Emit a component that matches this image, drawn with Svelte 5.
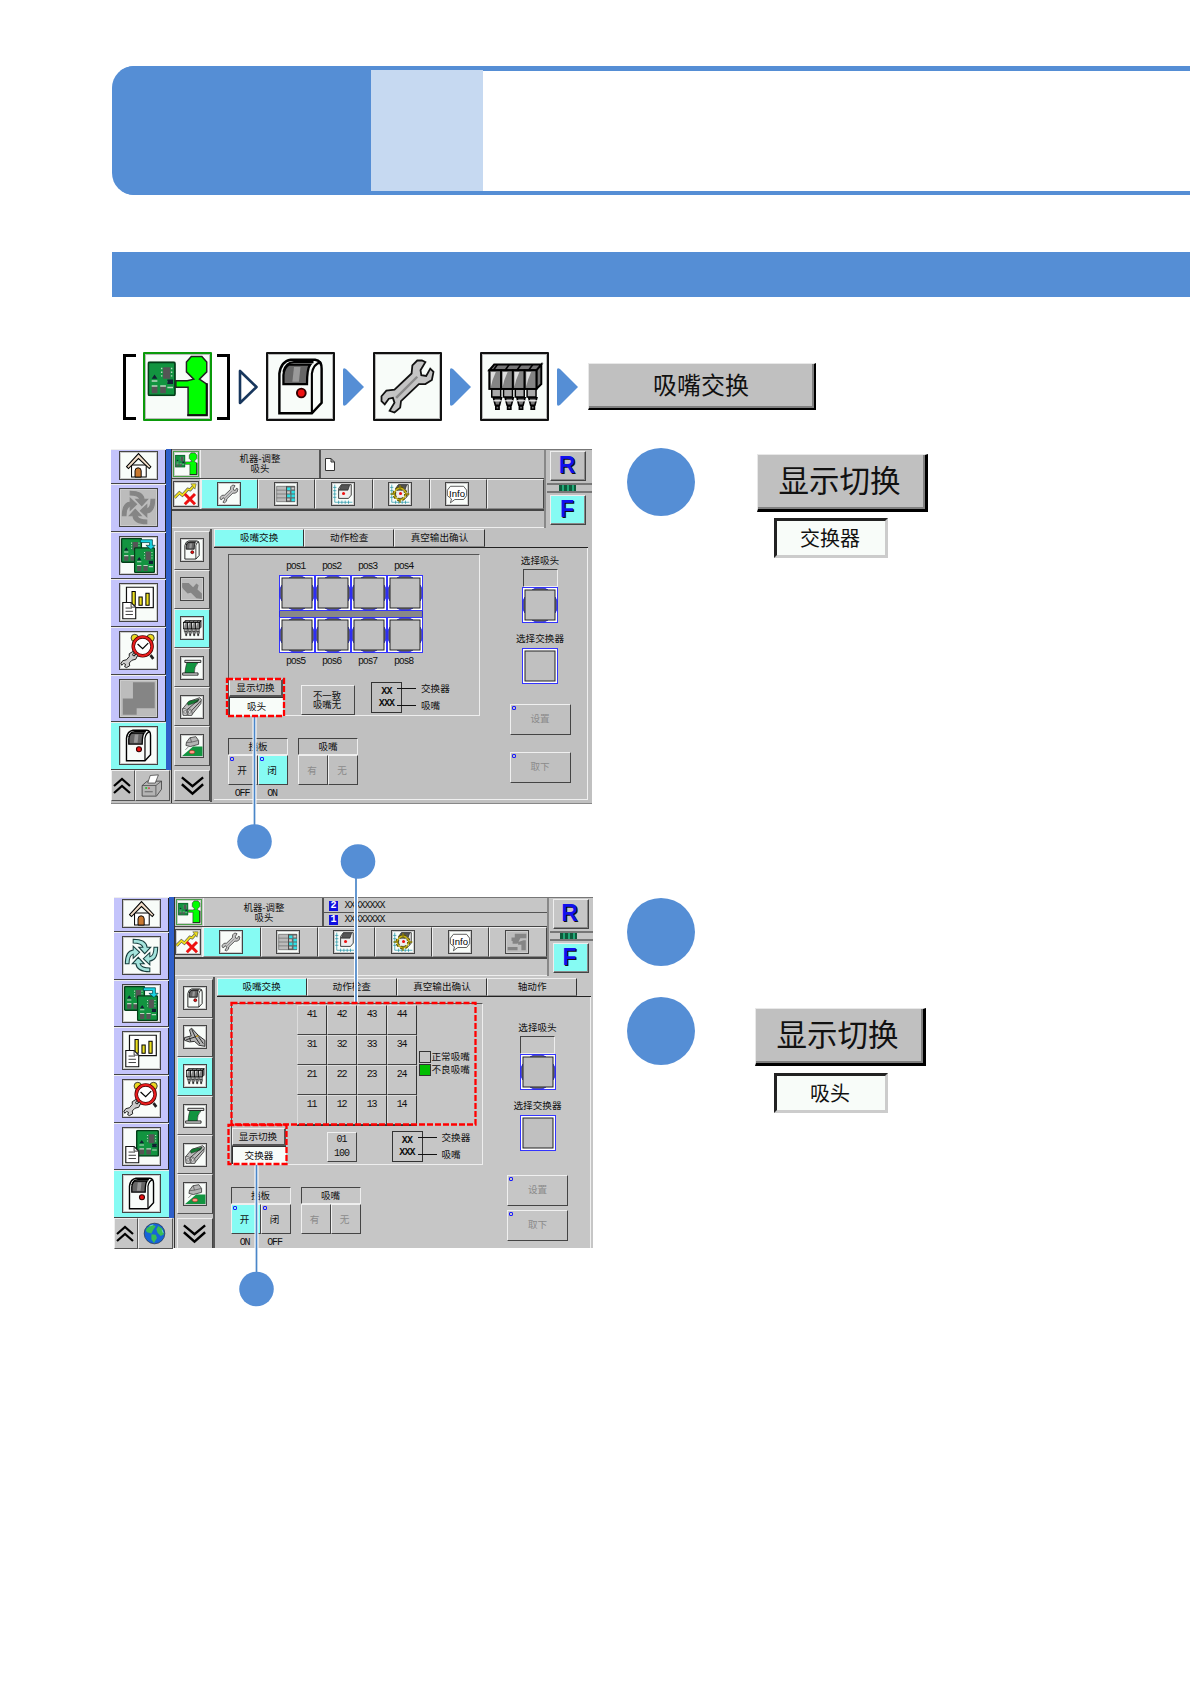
<script>
	const screens = [
		{
			id: 'head',
			nav: ['home', 'cycleOff', 'boards', 'chart', 'alarm', 'blocks', 'machine'],
			extra: 'printer',
			strip: ['machine', 'hand', 'head', 'belt', 'feeder', 'tray'],
			tools: ['wrench', 'table', 'axis', 'gear', 'info', ''],
			tabs: ['吸嘴交换', '动作检查', '真空输出确认'],
			mode: '吸头',
			shutter: 'close',
			shutterLabels: ['OFF', 'ON']
		},
		{
			id: 'changer',
			nav: ['home', 'cycle', 'boards', 'chart', 'alarm', 'report', 'machine'],
			extra: 'globe',
			strip: ['machine', 'handOn', 'head', 'belt', 'feeder', 'tray'],
			tools: ['wrench', 'table', 'axis', 'gear', 'info', 'unit'],
			tabs: ['吸嘴交换', '动作检查', '真空输出确认', '轴动作'],
			mode: '交换器',
			shutter: 'open',
			shutterLabels: ['ON', 'OFF']
		}
	];

	const cells = [41, 42, 43, 44, 31, 32, 33, 34, 21, 22, 23, 24, 11, 12, 13, 14];
	const frameless = ['', 'up', 'down', 'printer', 'globe'];
</script>

{#snippet pcb(x, y, w, h)}
	<svg {x} {y} width={w} height={h} viewBox="0 0 20 24" preserveAspectRatio="none">
		<rect x=".6" y=".6" width="18.8" height="22.8" rx="1" fill="#129440" stroke="#033d18" stroke-width="1.3" />
		<path d="M11 4h5v8h-5zM3 17h4v5H3zM9 17h4v5H9z" fill="#555" />
		<path d="M9.5 5h1M9.5 7.5h1M9.5 10h1M16.5 5h1M16.5 7.5h1M16.5 10h1M3 17h4M9 17h4M3 13.5h4M14 14h4M14 18h4" stroke="#b8d8bf" />
		<path d="M3 12l2-3 2 3zM14 12.5h4v3h-4z" fill="#123" />
	</svg>
{/snippet}

{#snippet glyph(name)}
	{#if name === 'operator'}
		{@render pcb(1.5, 4.5, 17.5, 21.5)}
		<path d="M28.500 1.500h6.500l3 3.500v6l-4.500 4.500 4.500 3v19H26.500V20.500H19v-4h7l4-1-4.500-4.500V5z" fill="#0f0" stroke="#222" stroke-width=".9" />
		<path d="M26 37.700h12V18" fill="none" stroke="#111" stroke-width="1.300" />
	{:else if name === 'machine'}
		<path d="M7 36.500V12Q8 4.500 14 3.500H29Q33 4 33 9V30L27 36.500z" fill="#f8fcf9" stroke="#000" stroke-width="1.500" />
		<path d="M27 36.500V12Q28 6 32.500 5M9.500 11Q11 5 16 5h12" fill="none" stroke="#000" stroke-width="1.300" />
		<path d="M9.500 18.500V13Q10 8 13 6.500H26Q24 9 24 18.500z" fill="#666" stroke="#000" stroke-width="1.400" />
		<path d="M15 17l1-9h4l-1 9z" fill="#999" />
		<circle cx="20.500" cy="24" r="2.700" fill="#e11" stroke="#300" stroke-width="1.200" />
	{:else if name === 'wrench'}
		<path d="M29 4l2 1-3 5 .5 3 3 .5 2.500-4.500 2 2-1 5-4 2.500h-4L16 29l-.5 4-3.500 3-3-1 3-5-1-3-2.500.5L6 31l-2-2v-3l3-3.500 5-.5L22.500 12 23 7l3-3z" fill="#c4c4c4" stroke="#111" stroke-width="1.100" />
		<path d="M13 27L26 14" stroke="#8a8a8a" stroke-width="1.500" />
	{:else if name === 'head'}
		<path d="M4.500 10l3-3.500H36.500L33.500 10zM33.500 10l3-3.500v12l-3 3z" fill="#777" stroke="#000" stroke-width="1.200" />
		{#each [0, 1, 2, 3] as i}
			<g transform="translate({4.5 + i * 7.25} 0)">
				<path d="M1.500 21.500h5.500v5h-5.500z" fill="#aaa" stroke="#000" stroke-width=".9" />
				<path d="M2.500 27h5l-1.200 4.500H3.700zM4 32h2v2H4z" fill="#777" stroke="#000" stroke-width="1" />
				<path d="M2.500 28.800h5" stroke="#fff" stroke-width=".7" />
				<rect y="10" width="7.250" height="11.500" fill="#848484" stroke="#000" stroke-width="1.200" />
				<path d="M1 11h3l-2 5-1 4z" fill="#ddd" />
				<path d="M2.500 10L5 6.500" stroke="#000" />
			</g>
		{/each}
	{:else if name === 'home'}
		<path d="M11 35.500V20h19v15.500z" fill="#fff" stroke="#000" stroke-width="1.300" />
		<path d="M4.500 22L20 5l16 17-2 2.500L20 11.500 7 24.500z" fill="#f2ddc8" stroke="#000" stroke-width="1.300" />
		<path d="M15.500 35.500V27.500q0-4 4-4t4 4v8z" fill="#c87830" stroke="#000" stroke-width="1.200" />
	{:else if name === 'cycle' || name === 'cycleOff'}
		<g fill={name === 'cycle' ? '#a5e4dd' : '#858585'} stroke={name === 'cycle' ? '#163c3c' : '#858585'} stroke-width="1.100">
			{#each [0, 90, 180, 270] as a}
				<path d="M11 2.500Q25 2.500 26 11h4l-6.500 7-6.500-7h4.500Q20 6.500 11 6.500z" transform="rotate({a} 20 20)" />
			{/each}
		</g>
	{:else if name === 'boards'}
		{@render pcb(1, 1, 23, 27)}
		{@render pcb(15, 11, 23, 28)}
		<path d="M22 3h13v6h3l-4.500 4.500L28 9h4V6H22z" fill="#19d4e4" stroke="#044" stroke-width=".8" />
	{:else if name === 'chart' || name === 'report'}
		{#if name === 'report'}
			{@render pcb(14, 2, 25, 29)}
		{:else}
			<path d="M7 3.500h29v22H7z" fill="#fff" stroke="#111" stroke-width="1.300" />
			<path d="M13 23V8h3.500v15zM20.500 23v-9H24v9zM28 23V10h3.500v13z" fill="#ede020" stroke="#000" stroke-width="1.100" />
		{/if}
		<path d="M3 37.500V20h9l5 5v12.500z" fill="#fff" stroke="#111" stroke-width="1.200" />
		<path d="M12 20v5h5M6 26h7M6 29.500h8M6 33h8" fill="none" stroke="#333" />
	{:else if name === 'alarm'}
		<circle cx="16" cy="6.500" r="4" fill="#ecd820" stroke="#333" />
		<circle cx="33" cy="6.500" r="4" fill="#ecd820" stroke="#333" />
		<path d="M17 25l-3 4M33 25l3 4" stroke="#222" stroke-width="3" />
		<circle cx="24.500" cy="15.500" r="10.200" fill="#fff" stroke="#400" stroke-width="3.800" />
		<circle cx="24.500" cy="15.500" r="10.200" fill="none" stroke="#e81c1c" stroke-width="2.400" />
		<path d="M19 13l5.500 5 6-6" fill="none" stroke="#000" stroke-width="1.300" />
		<path d="M14 21l1 1-1.500 3 2 1 2-2.500 1.500 2-2 4-4 1-3 3 .5 3L7 38.500l-2-1 1-2.500-2-1L2 36l-1-2 2-3 4-1 3-3.500v-3z" fill="#ccc" stroke="#111" />
	{:else if name === 'blocks'}
		<path d="M14 2.500h23.500v28H18v7H3V20h11z" fill="#858585" />
	{:else if name === 'printer'}
		<path d="M5 20l8-7h23v13l-8 11H5z" fill="#b4b4b4" stroke="#333" stroke-width="1.200" />
		<path d="M5 20h22v16M27 20l9-7M9 30h13" fill="none" stroke="#333" />
		<path d="M14 16l4-12 13-1-5 13z" fill="#fff" stroke="#222" />
		<path d="M10 24h3" stroke="#0b0" stroke-width="2" />
		<path d="M15 24h2" stroke="#d00" stroke-width="2" />
	{:else if name === 'globe'}
		<circle cx="20" cy="20" r="16.500" fill="#1764d8" stroke="#123" />
		<path d="M8 11l8-5 6 2-4 6-3 6-7-2-2-3zM15 21l7 1 2 5-5 8-4-6zM26 8l6 4 3 9-5 3-5-5-2-6z" fill="#39bd54" />
		<path d="M12 8l6-2M32 14l2 5" stroke="#9ce8ff" />
	{:else if name === 'up'}
		<path d="M4 20L20 6l16 14M4 34L20 20l16 14" fill="none" stroke="#000" stroke-width="4.500" />
	{:else if name === 'down'}
		<path d="M3 7l17 14L37 7M3 18l17 15 17-15" fill="none" stroke="#000" stroke-width="3.800" />
	{:else if name === 'hand'}
		<path d="M2 9h12l8 8 6-7 4 3-2 8 8 7v10l-10-1-10-10-6 1-8-8-2-3z" fill="#858585" />
	{:else if name === 'handOn'}
		<path d="M1 21l12-3-3-11 4-3 12 13 12 9v11l-11-2-8-7-9 1-9-3z" fill="#b4b4b4" stroke="#111" stroke-width="1.500" />
		<path d="M14 6l7 15M4 25l16-5 6-3M21 21l8 12M26 19l9 13M10 21l2 7" fill="none" stroke="#222" stroke-width="1.700" />
		<path d="M22 19l4-1" stroke="#da2" stroke-width="2.500" />
	{:else if name === 'belt'}
		<path d="M11 9h21q-9 9-8 21H7q1-12 4-21z" fill="#129440" stroke="#111" />
		<path d="M7 6h29v4H7zM3 29h28v4H3z" fill="#ddd" stroke="#111" stroke-width="1.500" />
	{:else if name === 'feeder'}
		<path d="M3 23L14 10 34 3l3 3-1 8-17 21H4z" fill="#bbb" stroke="#222" stroke-width="1.300" />
		<path d="M11 13l4-4 18-3-3 5-17 6z" fill="#147a32" stroke="#111" stroke-width=".6" />
		<path d="M11 25L33 6M17 29L36 9" stroke="#222" stroke-width="1.400" />
		<path d="M3 23h5q3 2 3 6v6H4zM12 24h5q3 2 3 6v5h-7z" fill="#ddd" stroke="#222" />
		<circle cx="7.500" cy="29" r="2.400" fill="#fff" stroke="#222" />
		<circle cx="16" cy="29" r="2.400" fill="#fff" stroke="#222" />
	{:else if name === 'tray'}
		<path d="M2 38l20-17h17v17z" fill="#129440" />
		<path d="M10 13l6-8 11-2 5 7v7l-15 4-8-2z" fill="#b5b5b5" stroke="#222" stroke-width="1.300" />
		<path d="M10 14l9-1 12-3M17 5l2 8M14 21l-6 6" fill="none" stroke="#333" />
		<ellipse cx="20" cy="31" rx="5" ry="3" fill="#ff9c88" stroke="#c22" />
	{:else if name === 'stats'}
		<path d="M1 26l8-8 5 4 9-10 4 1 8-9" fill="none" stroke="#555" stroke-width="5" />
		<path d="M1 26l8-8 5 4 9-10 4 1 8-9" fill="none" stroke="#efe01c" stroke-width="3" />
		<path d="M28 3h9l-2 9z" fill="#efe01c" stroke="#555" />
		<path d="M18 20l17 17M35 20L18 37" stroke="#e11" stroke-width="5" />
	{:else if name === 'table'}
		<path d="M3 6h18v28H3z" fill="#bbb" stroke="#444" />
		<path d="M21 6h15v28H21z" fill="#666" stroke="#222" />
		<path d="M22 8h6v5h-6zM30 14h6v5h-6zM22 21h6v5h-6zM30 21h6v5h-6zM30 28h6v5h-6z" fill="#2ce0e6" />
		<path d="M30 8h5v4h-5zM22 15h5v4h-5zM22 28h5v4h-5z" fill="#ccc" />
		<path d="M3 13h18M3 20h18M3 27h18" stroke="#555" />
	{:else if name === 'axis' || name === 'gear'}
		<path d="M5 3v32h32M2 8h6M2 14h6M2 20h6M2 26h6M12 32v6M18 32v6M24 32v6M30 32v6" fill="none" stroke="#138ca0" stroke-width="1.200" />
		<path d="M12 28V10l5-7h18v19l-5 6z" fill="#eee" stroke="#111" stroke-width="1.400" />
		<path d="M13 13l4-9h15l-3 9z" fill="#555" stroke="#111" />
		{#if name === 'gear'}
			<circle cx="20" cy="20" r="10.500" fill="none" stroke="#5c5000" stroke-width="6" stroke-dasharray="4 4.250" />
			<circle cx="20" cy="20" r="10.500" fill="none" stroke="#c8b414" stroke-width="2.400" />
			<path d="M20 4v8M20 28v8M3 20h8M29 20h8" stroke="#8d7d00" stroke-width="2.600" />
		{/if}
		<circle cx="21" cy="19" r="2.800" fill="#e11" />
	{:else if name === 'info'}
		<path d="M8 6h24l5.500 7v10L32 30H16l-8 6 2-7-7.500-6V13z" fill="#fff" stroke="#333" stroke-width="1.400" stroke-linejoin="round" />
		<text x="20" y="25" text-anchor="middle" font-family="Liberation Sans" font-size="18" textLength="29" lengthAdjust="spacingAndGlyphs">Info</text>
	{:else if name === 'unit'}
		<path d="M3 29h18v6H3zM16 5h21v8H26l-5 10h-9v-5h-2v-6h6zM22 20l10-3h4v18h-8V25h-6z" fill="#858585" />
	{/if}
{/snippet}

{#snippet icon(name)}
	<svg
		class="icon"
		class:framed={!frameless.includes(name)}
		class:off={['cycleOff', 'hand', 'blocks', 'unit'].includes(name)}
		class:green={name === 'operator'}
		viewBox={name === 'home' ? '2 3 36 35' : '0 0 40 40'}
	>
		{@render glyph(name)}
	</svg>
{/snippet}

{#snippet arrow(outline)}
	<svg class="arrow" class:outline viewBox="0 0 21 38">
		{#if outline}
			<path d="M2 3v32L18.500 19z" fill="#fff" stroke="#17365d" stroke-width="2.600" stroke-linejoin="round" />
		{:else}
			<path d="M0 2Q0-1 3 1L21 19 3 37Q0 39 0 36z" fill="#558ed5" />
		{/if}
	</svg>
{/snippet}

{#snippet slot(round)}
	<svg class="slot" viewBox="0 0 36 36">
		<rect x=".5" y=".5" width="35" height="35" fill="#fff" stroke="#3434ff" />
		{#if round}
			<path d="M10 3l4-2h8l4 2v30l-4 2h-8l-4-2zM3 10l-2 4v8l2 4h30l2-4v-8l-2-4z" fill="#777" />
			<path d="M10 3l4-2h8l4 2M10 33l4 2h8l4-2M3 10l-2 4v8l2 4M33 10l2 4v8l-2 4" fill="none" stroke="#2626e8" />
		{/if}
		<rect x="3" y="3" width="30" height="30" fill="#c0c0c0" stroke="#222" />
	</svg>
{/snippet}

{#snippet screen(s)}
	<div class="screen {s.id}">
		<aside>
			<nav>
				{#each s.nav as name, i}
					<div class="nav-item" class:active={i === 6}>{@render icon(name)}</div>
				{/each}
			</nav>
			<div class="nav-foot">
				<div class="foot-btn">{@render icon('up')}</div>
				<div class="foot-btn">{@render icon(s.extra)}</div>
			</div>
		</aside>

		<div class="main">
			<header class="top">
				<div class="bars">
					<div class="title-row">
						<div class="corner">{@render icon('operator')}</div>
						<div class="title"><span>机器-调整</span><span>吸头</span></div>
						{#if s.id === 'head'}
							<div class="job">
								<svg viewBox="0 0 10 13"><path d="M.5.500h5.500l3.500 3.500v8.500h-9zM6 .500v3.500h3.500" fill="#fff" stroke="#333" /></svg>
							</div>
						{:else}
							<div class="lanes">
								{#each [2, 1] as n}
									<div class="lane"><b>{n}</b><span>XXXXXXXX</span></div>
								{/each}
							</div>
						{/if}
					</div>
					<div class="tool-row">
						<div class="corner">{@render icon('stats')}</div>
						{#each s.tools as name, i}
							<div class="tool" class:active={i === 0}>{@render icon(name)}</div>
						{/each}
					</div>
					<div class="status"></div>
				</div>
				<div class="sides">
					<div class="side-btn">R</div>
					<div class="rail"><i></i></div>
					<div class="side-btn active">F</div>
				</div>
			</header>

			<div class="body">
				<div class="strip">
					{#each s.strip as name, i}
						<div class="strip-item" class:active={i === 2}>{@render icon(name)}</div>
					{/each}
					<div class="strip-item more">{@render icon('down')}</div>
				</div>

				<div class="content">
					<div class="tabs">
						{#each s.tabs as tab, i}
							<div class="tab" class:active={i === 0}>{tab}</div>
						{/each}
					</div>
					<div class="panel">
						<div class="work">
							<div class="group">
								{#if s.id === 'head'}
									<div class="positions">
										<div class="pos-row">
											{#each [1, 2, 3, 4] as n}<span>pos{n}</span>{/each}
										</div>
										<div class="slots">
											{#each [1, 2, 3, 4] as n}{@render slot(true)}{/each}
										</div>
										<div class="beam"></div>
										<div class="slots">
											{#each [5, 6, 7, 8] as n}{@render slot(true)}{/each}
										</div>
										<div class="pos-row lower">
											{#each [5, 6, 7, 8] as n}<span>pos{n}</span>{/each}
										</div>
									</div>
								{:else}
									<div class="holder">
										<div class="cells">
											{#each cells as cell}<span>{cell}</span>{/each}
										</div>
										<div class="legend">
											<div><i></i>正常吸嘴</div>
											<div><i class="bad"></i>不良吸嘴</div>
										</div>
									</div>
								{/if}
								<div class="group-foot">
									<div class="switch">
										<div class="switch-btn">显示切换</div>
										<div class="switch-value">{s.mode}</div>
									</div>
									{#if s.id === 'head'}
										<div class="btn mismatch"><span>不一致</span><span>吸嘴无</span></div>
									{:else}
										<div class="btn count"><span>01</span><span>100</span></div>
									{/if}
									<div class="key"><span>XX</span><span>XXX</span></div>
									<div class="key-names"><span>交换器</span><span>吸嘴</span></div>
								</div>
							</div>

							<div class="controls">
								<div class="control">
									<div class="control-title">挡板</div>
									<div class="pair">
										<div class="btn dot" class:active={s.shutter === 'open'}>开</div>
										<div class="btn dot" class:active={s.shutter === 'close'}>闭</div>
									</div>
									<div class="states">
										{#each s.shutterLabels as label}<span>{label}</span>{/each}
									</div>
								</div>
								<div class="control">
									<div class="control-title">吸嘴</div>
									<div class="pair">
										<div class="btn disabled">有</div>
										<div class="btn disabled">无</div>
									</div>
								</div>
							</div>
						</div>

						<div class="select">
							<div class="caption">选择吸头</div>
							<div class="field"></div>
							{@render slot(true)}
							<div class="caption second">选择交换器</div>
							{@render slot(false)}
							<div class="btn dot disabled set">设置</div>
							<div class="btn dot disabled remove">取下</div>
						</div>
					</div>
				</div>
			</div>
		</div>

		<svg class="marks" viewBox="0 0 482 460">
			{#if s.id === 'head'}
				<path d="M143.500 268V378" class="halo" />
				<path d="M143.500 268V378" class="lead" />
				<rect x="116" y="230" width="57" height="37" class="dash" />
				<circle cx="143.500" cy="392.500" r="17.300" fill="#558ed5" />
			{:else}
				<path d="M242-20V105M142.500 268V378" class="halo" />
				<path d="M242-20V105M142.500 268V378" class="lead" />
				<rect x="117.500" y="106" width="244" height="121.500" class="dash" />
				<rect x="114.500" y="228" width="58" height="39" class="dash" />
				<circle cx="244" cy="-35.500" r="17.300" fill="#558ed5" />
				<circle cx="142.500" cy="392" r="17.300" fill="#558ed5" />
			{/if}
		</svg>
	</div>
{/snippet}

<div class="page">
	<div class="banner">
		<div class="chapter"></div>
		<div class="number"></div>
	</div>
	<div class="bar"></div>

	<div class="path">
		<div class="bracket"></div>
		{@render icon('operator')}
		<div class="bracket right"></div>
		{@render arrow(true)}
		{@render icon('machine')}
		{@render arrow(false)}
		{@render icon('wrench')}
		{@render arrow(false)}
		{@render icon('head')}
		{@render arrow(false)}
		<div class="big-btn path-btn">吸嘴交换</div>
	</div>

	<div class="columns">
		<div class="screens">
			{#each screens as s}{@render screen(s)}{/each}
		</div>
		<div class="steps">
			<div class="step">
				<div class="bullet"></div>
				<div class="sample">
					<div class="big-btn">显示切换</div>
					<div class="big-field">交换器</div>
				</div>
			</div>
			<div class="step"><div class="bullet"></div></div>
			<div class="step last">
				<div class="bullet"></div>
				<div class="sample">
					<div class="big-btn">显示切换</div>
					<div class="big-field">吸头</div>
				</div>
			</div>
		</div>
	</div>
</div>

<style>
	:global(body) {
		background: #fff;
	}

	.page,
	.page * {
		box-sizing: border-box;
	}

	.page {
		width: 1190px;
		height: 1684px;
		padding: 65.500px 0 0 111.500px;
		overflow: hidden;
		font-family: 'Noto Sans CJK SC', sans-serif;
		color: #111;
	}

	.banner {
		display: flex;
		height: 129.500px;
		padding: 4.500px 0;
		border-radius: 22px 0 0 22px;
		background: linear-gradient(#558ed5 4.500px, #fff 4.500px 125px, #558ed5 125px);
	}

	.chapter {
		width: 259.500px;
		margin: -4.500px 0;
		border-radius: 22px 0 0 22px;
		background: #558ed5;
	}

	.number {
		width: 112px;
		background: #c6d9f1;
	}

	.bar {
		height: 45px;
		margin-top: 57px;
		margin-left: 0.500px;
		background: #558ed5;
	}

	.path {
		display: flex;
		align-items: center;
		height: 69px;
		margin-top: 55px;
		padding-left: 11.500px;
	}

	.bracket {
		width: 13px;
		height: 66px;
		margin-right: 7px;
		border: 3px solid #000;
		border-right: 0;
	}

	.bracket.right {
		margin: 0 8px 0 5px;
		border-right: 3px solid #000;
		border-left: 0;
	}

	.arrow {
		width: 21px;
		height: 38px;
		margin: 0 9.500px 0 7.500px;
	}

	.arrow.outline {
		margin: 0 7px 0 0;
	}

	.big-btn {
		display: flex;
		align-items: center;
		justify-content: center;
		width: 171px;
		height: 58px;
		padding: 0 4px 4px 0;
		background: #c0c0c0;
		border: solid;
		border-width: 1px 3px 3px 1px;
		border-color: #e8e8e8 #000 #000 #e8e8e8;
		box-shadow: inset -2px -2px 0 #808080;
		font-size: 30.500px;
		line-height: 1;
		white-space: nowrap;
	}

	.path-btn {
		width: 228px;
		height: 47px;
		margin: -1px 0 0 1px;
		padding: 0 1px 3px 0;
		border-width: 1px 2px 2px 1px;
		font-size: 24px;
	}

	.big-field {
		display: flex;
		align-items: center;
		justify-content: center;
		width: 114px;
		height: 40px;
		margin: 6px 0 0 17px;
		padding-right: 2px;
		background: #f8fcf9;
		border: 3px solid;
		border-color: #222 #ccc #ccc #222;
		font-size: 20px;
		line-height: 1;
	}

	.columns {
		display: flex;
		margin-top: 27.500px;
	}

	.screens {
		width: 481px;
		margin-left: -0.500px;
	}

	.steps {
		margin: -1px 0 0 35px;
	}

	.step {
		display: flex;
		height: 450px;
	}

	.step:nth-child(2) {
		height: 99px;
	}

	.bullet {
		width: 68px;
		height: 68px;
		border-radius: 50%;
		background: #558ed5;
	}

	.sample {
		padding: 6px 0 0 62px;
	}

	.last .sample {
		padding: 11px 0 0 60px;
	}

	.last .big-field {
		margin: 7px 0 0 19px;
	}

	.screen {
		display: flex;
		position: relative;
		width: 481px;
		height: 355px;
		margin-bottom: 93px;
		background: #c0c0c0;
		font-size: 9.600px;
		line-height: 1;
		border-bottom: 1px solid #888;
	}

	.changer {
		width: 479px;
		height: 351px;
		margin-left: 2.500px;
		background: #c6c6c6;
		border-bottom: 0;
	}

	.icon {
		display: block;
		flex: none;
	}

	.icon.framed {
		background: #f8fcf9;
		border: 1px solid #444;
		box-shadow: inset 0 0 0 1px #ccc;
	}

	.icon.off {
		background: #bcbcbc;
	}

	.icon.green {
		border-color: #4aa04a;
	}

	.path .icon.framed {
		width: 69px;
		height: 69px;
		border: 2px solid #111;
		border-radius: 1px;
		box-shadow: inset 0 0 0 1px #bbb;
	}

	.path .icon.green {
		border-color: #0a9a0a;
	}

	aside {
		width: 60px;
	}

	nav {
		height: 321.500px;
		background: #c4c4fb;
		border-right: 5px solid #2f5fc9;
		box-shadow: inset -1px 0 0 #222;
	}

	.nav-item {
		display: flex;
		align-items: center;
		justify-content: center;
		height: 47.700px;
		border-bottom: 1px solid #444;
		box-shadow: inset 0 1px 0 #eee;
	}

	.nav-item:first-child {
		height: 35.500px;
		padding-bottom: 1px;
		overflow: hidden;
	}

	.nav-item .icon {
		width: 39px;
		height: 39px;
	}

	.nav-item:first-child .icon {
		height: 29px;
	}

	.active {
		background: #86fbf3;
	}

	.nav-foot {
		display: flex;
		height: 31px;
	}

	.foot-btn {
		display: flex;
		align-items: center;
		justify-content: center;
		width: 24px;
		padding-right: 2px;
		border: 1px solid;
		border-color: #eee #555 #555 #eee;
	}

	.foot-btn + .foot-btn {
		width: 35px;
	}

	.foot-btn .icon {
		width: 20px;
		height: 24px;
	}

	.foot-btn + .foot-btn .icon {
		width: 25px;
		height: 25px;
	}

	.main {
		flex: 1;
		border-left: 1px solid #333;
	}

	.top {
		display: flex;
		height: 79px;
		border-top: 1px solid #777;
	}

	.bars {
		width: 372px;
	}

	.title-row {
		display: flex;
		height: 29px;
		border-bottom: 1px solid #444;
	}

	.corner {
		display: flex;
		align-items: center;
		justify-content: center;
		width: 29px;
		border-right: 1px solid #eee;
	}

	.corner .icon {
		width: 26px;
		height: 26px;
	}

	.title {
		display: flex;
		flex-direction: column;
		align-items: center;
		justify-content: center;
		width: 120px;
		border-right: 2px solid #555;
		font-size: 9.400px;
		line-height: 9.500px;
	}

	.changer .title {
		padding: 2px 0 0 3px;
	}

	.title span,
	.mismatch span {
		height: 9.500px;
	}

	.job {
		padding: 8px 0 0 4px;
	}

	.job svg {
		display: block;
		width: 10px;
		height: 13px;
	}

	.lanes {
		flex: 1;
		padding-top: 1px;
	}

	.lane {
		display: flex;
		align-items: center;
		gap: 7px;
		height: 14.500px;
		padding: 1px 0 0 5px;
		border-bottom: 1px solid #555;
		font-family: 'Liberation Mono', monospace;
		font-size: 10px;
		letter-spacing: -1px;
	}

	.lane b {
		width: 9px;
		height: 10px;
		background: #1010e0;
		color: #fff;
		text-align: center;
	}

	.tool-row {
		display: flex;
		height: 32px;
		border-bottom: 2px solid #444;
	}

	.tool {
		display: flex;
		align-items: center;
		justify-content: center;
		width: 57.200px;
		padding-right: 2px;
		border: 1px solid;
		border-color: #eee #444 #888 #eee;
	}

	.tool .icon,
	.strip-item .icon {
		width: 24px;
		height: 24px;
	}

	.status {
		height: 17px;
		border-bottom: 1px solid #eee;
	}

	.sides {
		flex: 1;
		padding: 1px 0 0 4px;
		border-left: 2px solid #888;
	}

	.side-btn {
		display: flex;
		align-items: center;
		justify-content: center;
		width: 36px;
		height: 30px;
		padding-right: 2px;
		border: 1px solid;
		border-color: #eee #444 #444 #eee;
		box-shadow: inset -1px -1px 0 #888;
		color: #1010ee;
		font-family: 'Liberation Sans', sans-serif;
		font-size: 23px;
		font-weight: bold;
		text-shadow: 1px 1px 0 #111;
	}

	.rail {
		display: flex;
		align-items: center;
		justify-content: center;
		height: 10px;
		margin: 2px 0 2px -3px;
		border: solid #777;
		border-width: 2px 0;
	}

	.rail i {
		width: 17px;
		height: 6px;
		margin-right: 5px;
		background: repeating-linear-gradient(90deg, #0d5c3c 0 3px, #23a878 3px 5px);
	}

	.body {
		display: flex;
		height: 274px;
		padding-top: 1px;
	}

	.strip {
		width: 40px;
		padding: 2px 0 0 2px;
		border-right: 2px solid #555;
	}

	.strip-item {
		display: flex;
		align-items: center;
		justify-content: center;
		width: 36px;
		height: 39.200px;
		border: 1px solid;
		border-color: #eee #444 #555 #eee;
	}

	.more {
		height: 31px;
		margin-top: 4px;
	}

	.more .icon {
		width: 25px;
		height: 25px;
	}

	.content {
		width: 376px;
		padding-left: 2px;
	}

	.changer .content {
		padding-top: 1px;
	}

	.tabs {
		display: flex;
		height: 19px;
		border-bottom: 1px solid #222;
	}

	.tab {
		display: flex;
		align-items: center;
		justify-content: center;
		width: 90.200px;
		padding-top: 1px;
		border: 1px solid;
		border-color: #eee #333 #888 #eee;
	}

	.panel {
		display: flex;
		height: 252px;
		padding-left: 14px;
		border-right: 1px solid #f0f0f0;
		border-bottom: 1px solid #f0f0f0;
	}

	.changer .panel {
		border-bottom: 0;
	}

	.changer .body {
		height: 272px;
		overflow: hidden;
	}

	.work {
		width: 252px;
		padding-top: 6px;
	}

	.group {
		height: 162.500px;
		border: 1px solid;
		border-color: #555 #eee #eee #555;
	}

	.positions {
		width: 144px;
		height: 124.500px;
		margin-left: 50px;
		padding-top: 5px;
	}

	.pos-row {
		display: flex;
		align-items: center;
		height: 15px;
		font-family: 'Liberation Mono', monospace;
		font-size: 10px;
		letter-spacing: -1.300px;
	}

	.pos-row.lower {
		padding-top: 4px;
	}

	.pos-row span {
		width: 36px;
		padding-right: 3px;
		text-align: center;
	}

	.slots {
		display: flex;
	}

	.slot {
		display: block;
		width: 36px;
		height: 36px;
	}

	.beam {
		height: 6px;
		background: #888;
		border: solid #2626e8;
		border-width: 0 1px;
	}

	.holder {
		display: flex;
		height: 124.500px;
		padding: 1px 0 0 65px;
	}

	.cells {
		display: grid;
		grid-template-columns: repeat(4, 30px);
		grid-template-rows: repeat(4, 30px);
		height: 121px;
		border-bottom: 1px solid #333;
		font-family: 'Liberation Mono', monospace;
		font-size: 10px;
		text-align: center;
		letter-spacing: -1.200px;
	}

	.cells span {
		padding-top: 4px;
		border: 1px solid;
		border-color: #ddd #333 #444 #ddd;
	}

	.legend {
		padding: 46px 0 0 2px;
	}

	.legend div {
		display: flex;
		align-items: center;
		gap: 1px;
		height: 13px;
		white-space: nowrap;
	}

	.legend i {
		width: 12px;
		height: 12px;
		border: 1px solid #333;
	}

	.legend .bad {
		background: #00bd00;
	}

	.group-foot {
		display: flex;
		height: 36px;
	}

	.switch {
		width: 54px;
	}

	.switch div {
		display: flex;
		align-items: center;
		justify-content: center;
		height: 18px;
		white-space: nowrap;
	}

	.switch-btn {
		border: solid;
		border-width: 1px 2px 2px 1px;
		border-color: #eee #555 #555 #eee;
	}

	.switch-value {
		background: #f8fcf9;
		border: solid #333;
		border-width: 1px 0 0 1px;
	}

	.btn {
		display: flex;
		align-items: center;
		justify-content: center;
		position: relative;
		border: solid;
		border-width: 1px 1.500px 1.500px 1px;
		border-color: #f0f0f0 #444 #444 #f0f0f0;
	}

	.dot::before {
		content: '';
		position: absolute;
		top: 1px;
		left: 1px;
		width: 2px;
		height: 2px;
		border: 1px solid #1a1aff;
		border-radius: 1px;
	}

	.disabled {
		color: #8b8b8b;
	}

	.mismatch {
		flex-direction: column;
		width: 54px;
		height: 30px;
		margin: 6px 0 0 18px;
		padding-right: 2px;
		font-size: 9.400px;
		line-height: 9.500px;
	}

	.count {
		flex-direction: column;
		justify-content: space-around;
		width: 30px;
		height: 30px;
		margin: 4px 0 0 41px;
		font-family: 'Liberation Mono', monospace;
		font-size: 10px;
		letter-spacing: -1px;
	}

	.key {
		display: flex;
		flex-direction: column;
		align-items: center;
		justify-content: space-around;
		width: 31px;
		height: 31px;
		margin: 3px 0 0 16px;
		padding: 3px 0 2px;
		border: 1px solid #333;
		font-family: 'Liberation Mono', monospace;
		font-size: 10px;
		font-weight: bold;
		letter-spacing: -0.800px;
	}

	.changer .key {
		margin-left: 35px;
	}

	.key-names {
		display: flex;
		flex-direction: column;
		gap: 7px;
		padding-top: 5px;
		margin-left: -5px;
		white-space: nowrap;
	}

	.key-names span {
		display: flex;
		align-items: center;
		gap: 5px;
	}

	.key-names span::before {
		content: '';
		width: 19px;
		height: 1px;
		background: #111;
	}

	.controls {
		display: flex;
		gap: 10px;
		padding-top: 22px;
	}

	.control {
		width: 60px;
	}

	.control-title {
		display: flex;
		align-items: center;
		justify-content: center;
		height: 17px;
		border: 1px solid;
		border-color: #444 #eee #eee #444;
	}

	.pair {
		display: flex;
	}

	.pair .btn {
		width: 30px;
		height: 30px;
		padding: 2px 2px 0 0;
	}

	.states {
		display: flex;
		padding-top: 4px;
		font-family: 'Liberation Mono', monospace;
		font-size: 10px;
		letter-spacing: -1.200px;
	}

	.states span {
		width: 30px;
		padding-right: 2px;
		text-align: center;
	}

	.select {
		display: flex;
		flex-direction: column;
		align-items: center;
		width: 62px;
		margin-left: 29px;
		padding-top: 8px;
		white-space: nowrap;
	}

	.field {
		width: 35px;
		height: 18px;
		margin-top: 4px;
		border: 1px solid;
		border-color: #444 #eee #eee #444;
	}

	.caption.second {
		margin: 11px 0 4px;
	}

	.select .btn {
		width: 61px;
		height: 31px;
	}

	.set {
		margin-top: 20px;
	}

	.remove {
		margin-top: 17px;
	}

	.changer .select {
		margin-left: 24px;
		padding-top: 26px;
	}

	.changer .set {
		margin-top: 24px;
	}

	.changer .remove {
		margin-top: 4px;
	}

	.marks {
		position: absolute;
		top: 0;
		left: 0;
		width: 482px;
		height: 460px;
		overflow: visible;
	}

	.halo {
		stroke: #fff;
		stroke-width: 4;
	}

	.lead {
		stroke: #4a86c8;
		stroke-width: 1.700;
	}

	.dash {
		fill: none;
		stroke: #f00;
		stroke-width: 2.300;
		stroke-dasharray: 6 2;
	}
</style>
